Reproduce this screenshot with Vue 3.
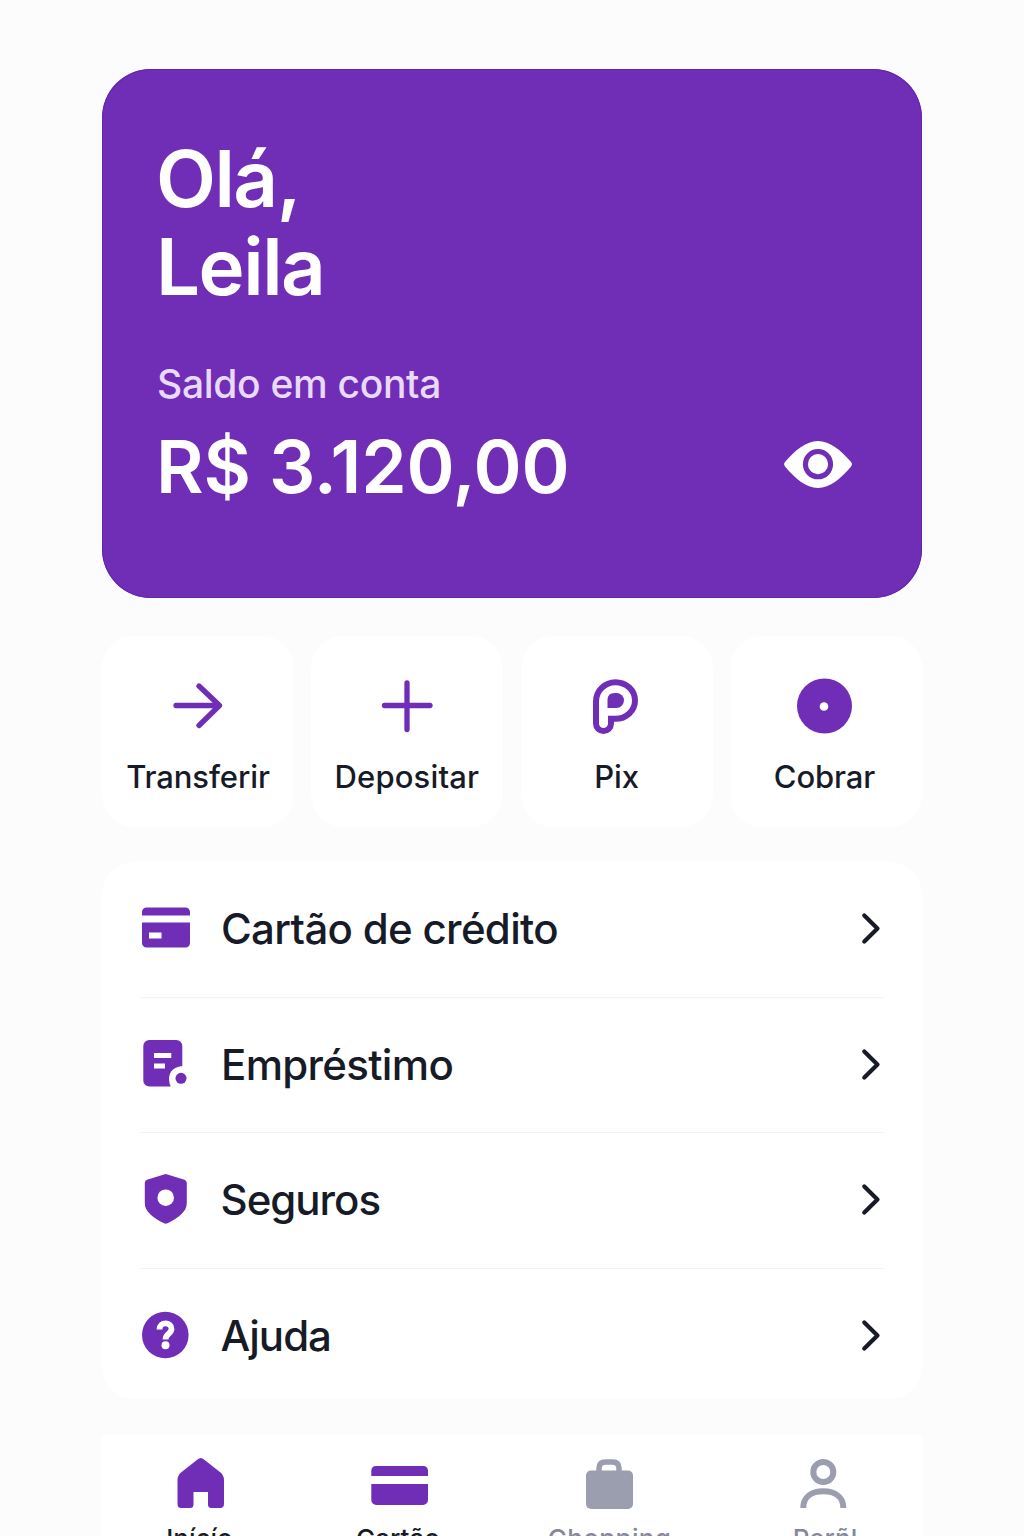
<script setup>
const actions = [
  { id: 'transfer', label: 'Transferir' },
  { id: 'deposit', label: 'Depositar' },
  { id: 'pix', label: 'Pix' },
  { id: 'charge', label: 'Cobrar' },
]
const services = [
  { id: 'card', label: 'Cartão de crédito' },
  { id: 'loan', label: 'Empréstimo' },
  { id: 'insurance', label: 'Seguros' },
  { id: 'help', label: 'Ajuda' },
]
</script>

<template>
  <main class="screen">
    <section class="balance">
      <h1 class="greeting"><span class="hello">Olá,</span><br />Leila</h1>
      <p class="caption">Saldo em conta</p>
      <div class="amount-row">
        <strong class="amount">R$ 3.120,00</strong>
        <svg class="eye" width="70" height="50" viewBox="783 439 70 50">
          <path fill="#fff" d="M784.8 462.3C795 450.500 806 441 818 441S841 450.500 851.300 462.300Q853 464.300 851.300 466.300C841 478.500 830 488 818 488S795 478.500 784.800 466.300Q783 464.300 784.800 462.300Z" />
          <circle cx="818" cy="464.200" r="12.600" fill="none" stroke="#702eb6" stroke-width="5" />
        </svg>
      </div>
    </section>

    <nav class="actions">
      <button v-for="a in actions" :key="a.id" class="action">
        <svg v-if="a.id === 'transfer'" class="glyph" width="60" height="60" viewBox="168 676 60 60">
          <path d="M176 705.500H219M199 686L219.500 705.500L199 725.500" fill="none" stroke="#702eb6" stroke-width="5.300" stroke-linecap="round" stroke-linejoin="round" />
        </svg>
        <svg v-else-if="a.id === 'deposit'" class="glyph" width="60" height="60" viewBox="377 676 60 60">
          <path d="M384.500 705.500H430M407 683V729.500" fill="none" stroke="#702eb6" stroke-width="5.300" stroke-linecap="round" />
        </svg>
        <svg v-else-if="a.id === 'pix'" class="glyph" width="60" height="60" viewBox="587 676 60 60">
          <path d="M596 701.500A19.500 19.300 0 0 1 615.500 682.200A19.500 18.300 0 0 1 615.500 718.800H611V723.500A7.500 7.500 0 0 1 596 723.500Z" fill="#fff" stroke="#702eb6" stroke-width="6" />
          <path d="M607.500 708V700Q607.500 693 614.500 693H616.500A7.500 7.500 0 0 1 616.500 708Z" fill="#702eb6" />
        </svg>
        <svg v-else class="glyph" width="60" height="60" viewBox="796 676 60 60">
          <circle cx="824.500" cy="706" r="27.500" fill="#702eb6" />
          <circle cx="824" cy="706.500" r="4.300" fill="#fff" />
        </svg>
        <span :class="['action-label', a.id]">{{ a.label }}</span>
      </button>
    </nav>

    <section class="services">
      <a v-for="s in services" :key="s.id" class="service">
        <svg v-if="s.id === 'card'" class="service-icon" width="50" height="54" viewBox="141 901.500 50 54">
          <path fill="#702eb6" d="M142 915V911.500A4.500 4.500 0 0 1 146.500 907H185.500A4.500 4.500 0 0 1 190 911.500V915ZM142 922H190V942.500A4.500 4.500 0 0 1 185.500 947H146.500A4.500 4.500 0 0 1 142 942.500Z" />
          <rect x="149" y="932" width="12.500" height="6" fill="#fff" />
        </svg>
        <svg v-else-if="s.id === 'loan'" class="service-icon" width="50" height="54" viewBox="141 1038 50 54">
          <rect x="143.300" y="1040" width="39" height="46.500" rx="6" fill="#702eb6" />
          <path d="M154 1053H171.300V1058H154ZM154 1063.500H165V1068.500H154Z" fill="#fff" />
          <path d="M184 1066V1088H171.500Q169 1084 169 1079C169 1071 175 1066 184 1066Z" fill="#fff" />
          <circle cx="181" cy="1078.300" r="5.500" fill="#702eb6" />
        </svg>
        <svg v-else-if="s.id === 'insurance'" class="service-icon" width="50" height="54" viewBox="141 1173 50 54">
          <path d="M164 1174.500Q165.700 1173.700 167.500 1174.500L184.500 1179.700Q186.800 1180.500 186.800 1183V1203C186.800 1212 178.500 1217.500 167.500 1223.300Q165.700 1224.200 164 1223.300C153 1217.500 144.800 1212 144.800 1203V1183Q144.800 1180.500 147 1179.700Z" fill="#702eb6" />
          <circle cx="165.700" cy="1197.700" r="8.300" fill="#fff" />
        </svg>
        <svg v-else class="service-icon" width="50" height="54" viewBox="141 1308.500 50 54">
          <circle cx="165.300" cy="1334.500" r="23.300" fill="#702eb6" />
          <path d="M159.500 1329C159.500 1320.800 171.500 1321 171.500 1328.300C171.500 1333.500 165.500 1333 165.500 1339" fill="none" stroke="#fff" stroke-width="5.800" />
          <circle cx="165.500" cy="1344.700" r="4" fill="#fff" />
        </svg>
        <span :class="['service-label', s.id]">{{ s.label }}</span>
        <svg class="chevron" width="24" height="36" viewBox="860 911 24 36">
          <path d="M864.300 915.500L877.500 928.500L864.300 941.500" fill="none" stroke="#171b28" stroke-width="4.200" stroke-linecap="round" stroke-linejoin="round" />
        </svg>
      </a>
    </section>

    <nav class="tabs">
      <a class="tab home">
        <svg width="60" height="54" viewBox="171 1456 60 54">
          <path d="M197.500 1459.500Q200.700 1456.500 204 1459.500L220.500 1472.500Q224 1475.500 224 1480V1504Q224 1508 220 1508H211.500Q208 1508 208 1504.500V1492H193.500V1504.500Q193.500 1508 190 1508H181Q177.500 1508 177.500 1504V1480Q177.500 1475.500 181 1472.500Z" fill="#702eb6" />
        </svg>
        <span>Inícío</span>
      </a>
      <a class="tab cards">
        <svg width="60" height="54" viewBox="370 1456 60 54">
          <path d="M371.300 1476V1470.500A4.500 4.500 0 0 1 375.800 1466H423.500A4.500 4.500 0 0 1 428 1470.500V1476ZM371.300 1484H428V1500A5 5 0 0 1 423 1505H376.300A5 5 0 0 1 371.300 1500Z" fill="#702eb6" />
        </svg>
        <span>Cartão</span>
      </a>
      <a class="tab shopping">
        <svg width="60" height="54" viewBox="580 1456 60 54">
          <rect x="586" y="1470.500" width="47" height="38.500" rx="5" fill="#9b9eae" />
          <path d="M599 1472V1468.500Q599 1462 605.500 1462H612.500Q619 1462 619 1468.500V1472" fill="none" stroke="#9b9eae" stroke-width="5.500" />
        </svg>
        <span>Chopping</span>
      </a>
      <a class="tab profile">
        <svg width="60" height="54" viewBox="794 1456 60 54">
          <circle cx="823.300" cy="1472" r="10" fill="none" stroke="#9b9eae" stroke-width="6" />
          <path d="M803.300 1508C803.300 1497 811.500 1491.300 823.300 1491.300S843.300 1497 843.300 1508" fill="none" stroke="#9b9eae" stroke-width="6" />
        </svg>
        <span>Perñl</span>
      </a>
    </nav>
  </main>
</template>

<style>
body {
  margin: 0;
  background: #fdfdfd;
}
</style>

<style scoped>
.screen {
  box-sizing: border-box;
  width: 1024px;
  height: 1536px;
  overflow: hidden;
  padding: 69px 102px 0;
  display: flex;
  flex-direction: column;
  background: #fcfcfd;
  font-family: Inter, "Liberation Sans", sans-serif;
  color: #171b28;
}
.balance {
  box-sizing: border-box;
  height: 529px;
  flex: none;
  padding: 66px 69px 0 54px;
  border-radius: 49px;
  background: #702eb6;
  box-shadow: inset 0 0 0 1px #6424b0;
  color: #fff;
}
.greeting {
  margin: 0;
  font-size: 78px;
  line-height: 88px;
  font-weight: 600;
  letter-spacing: -1.500px;
}
.caption {
  margin: 49px 0 0 1px;
  font-size: 39px;
  line-height: 48px;
  font-weight: 500;
  letter-spacing: -0.300px;
  color: #e9d9fa;
}
.amount-row {
  display: flex;
  align-items: center;
  justify-content: space-between;
  height: 84px;
  margin-top: 17px;
}
.amount {
  font-size: 73px;
  line-height: 84px;
  font-weight: 600;
  letter-spacing: -0.150px;
}
.eye {
  display: block;
  margin-top: -7px;
}
.actions {
  display: grid;
  grid-template-columns: repeat(4, 192px);
  justify-content: space-between;
  margin-top: 38px;
}
.action {
  box-sizing: border-box;
  display: flex;
  flex-direction: column;
  align-items: center;
  height: 191px;
  padding: 40px 0 0;
  border: 0;
  border-radius: 32px;
  background: #fff;
  color: #171b28;
  font-family: inherit;
}
.glyph {
  flex: none;
}
.action-label {
  margin-top: 21px;
  font-size: 31px;
  line-height: 40px;
  font-weight: 480;
  letter-spacing: -0.100px;
  white-space: nowrap;
}
.action-label.deposit {
  margin-right: 1px;
  letter-spacing: 0.150px;
}
.action-label.charge {
  margin-right: 3px;
}
.services {
  box-sizing: border-box;
  height: 537px;
  flex: none;
  margin-top: 35px;
  padding: 0 38px;
  border-radius: 32px;
  background: #fff;
}
.service {
  box-sizing: border-box;
  display: flex;
  align-items: center;
  height: 135.500px;
  padding-left: 1px;
  border-bottom: 1px solid #f3f3f5;
}
.service:last-child {
  border: 0;
}
.service-label {
  margin-left: 30px;
  font-size: 42px;
  line-height: 52px;
  font-weight: 450;
  letter-spacing: -0.680px;
}
.service-label.insurance,
.service-label.help {
  margin-left: 29.500px;
  letter-spacing: -1px;
}
.chevron {
  margin-left: auto;
}
.tabs {
  display: grid;
  grid-template-columns: 198px 200px 219px 1fr;
  height: 101px;
  flex: none;
  box-sizing: border-box;
  margin-top: 36px;
  padding-top: 21px;
  background: #fff;
}
.tab {
  display: flex;
  flex-direction: column;
  align-items: center;
  font-size: 26px;
  line-height: 32px;
  font-weight: 450;
}
.tab svg {
  flex: none;
}
.tab span {
  margin-top: 13px;
}
.home span {
  margin-right: 3px;
}
.cards span {
  margin-right: 4px;
}
.shopping,
.profile {
  color: #85889c;
}
.shopping span {
  letter-spacing: 0.300px;
}
.profile {
  padding-left: 6px;
}
.profile span {
  margin-left: 3px;
}
</style>
